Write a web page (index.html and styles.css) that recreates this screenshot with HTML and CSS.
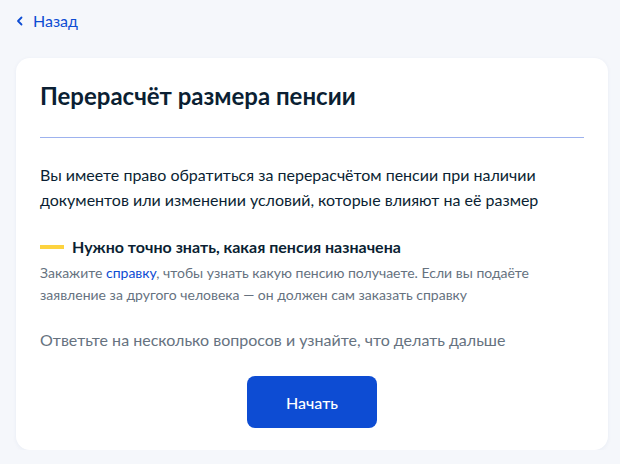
FILE: index.html
```html
<!DOCTYPE html>
<html lang="ru">
<head>
  <meta charset="UTF-8">
  <title>Перерасчёт размера пенсии</title>
  <link rel="stylesheet" href="styles.css">
</head>
<body>

  <!-- Back link -->
  <div class="back">
    <a href="#" class="back-link">
      <svg width="8" height="10" viewBox="0 0 8 10"><path d="M5.5 1.5 L2 5 L5.5 8.5" fill="none" stroke="#0d4cd3" stroke-width="1.8" stroke-linecap="round" stroke-linejoin="round"/></svg>
      <span>Назад</span>
    </a>
  </div>

  <!-- Card -->
  <div class="card">
    <h1 class="title">Перерасчёт размера пенсии</h1>

    <p class="lead">Вы имеете право обратиться за перерасчётом пенсии при наличии документов или изменении условий, которые влияют на её размер</p>

    <div class="note">
      <div class="note-head">
        <span class="dash"></span>
        <span>Нужно точно знать, какая пенсия назначена</span>
      </div>
      <p class="note-text">Закажите <a href="#">справку</a>, чтобы узнать какую пенсию получаете. Если вы подаёте заявление за другого человека — он должен сам заказать справку</p>
    </div>

    <p class="hint">Ответьте на несколько вопросов и узнайте, что делать дальше</p>

    <div class="actions">
      <button class="start">Начать</button>
    </div>
  </div>

</body>
</html>
```

FILE: styles.css
```css
body {
  margin: 0;
  font-family: Lato, "Noto Sans", sans-serif;
  background-color: #f5f7fb;
  color: #0b1f33;
}

.back {
  padding: 9px 16px 0;
  height: 58px;
  box-sizing: border-box;
}

.back-link {
  display: inline-flex;
  align-items: center;
  gap: 9px;
  color: #0d4cd3;
  text-decoration: none;
  font-size: 16px;
  line-height: 24px;
}

.card {
  margin: 0 12px 0 16px;
  background-color: white;
  border-radius: 14px;
  padding: 22px 24px 22px;
  box-shadow: 0 1px 4px rgba(30, 60, 140, 0.06);
}

.title {
  margin: 0;
  font-size: 24px;
  line-height: 32px;
  font-weight: 700;
  padding-bottom: 25px;
  border-bottom: 1px solid #9db2ee;
}

.lead {
  margin: 24px 0 0;
  font-size: 16px;
  line-height: 25px;
}

.note {
  margin-top: 24px;
}

.note-head {
  display: flex;
  align-items: center;
  gap: 8px;
  font-size: 16px;
  line-height: 22px;
  font-weight: 700;
}

.dash {
  width: 24px;
  height: 4px;
  background-color: #fdd33f;
}

.note-text {
  margin: 4px 0 0;
  font-size: 14px;
  line-height: 22px;
  color: #66727f;
}

.note-text a {
  color: #0d4cd3;
  text-decoration: none;
}

.hint {
  margin: 22px 0 0;
  font-size: 16px;
  line-height: 24px;
  color: #66727f;
}

.actions {
  display: flex;
  justify-content: center;
  margin-top: 24px;
}

.start {
  width: 130px;
  height: 52px;
  border: none;
  border-radius: 8px;
  background-color: #0d4cd3;
  color: white;
  font-family: Lato, "Noto Sans", sans-serif;
  font-size: 16px;
  font-weight: 500;
  cursor: pointer;
}
```
